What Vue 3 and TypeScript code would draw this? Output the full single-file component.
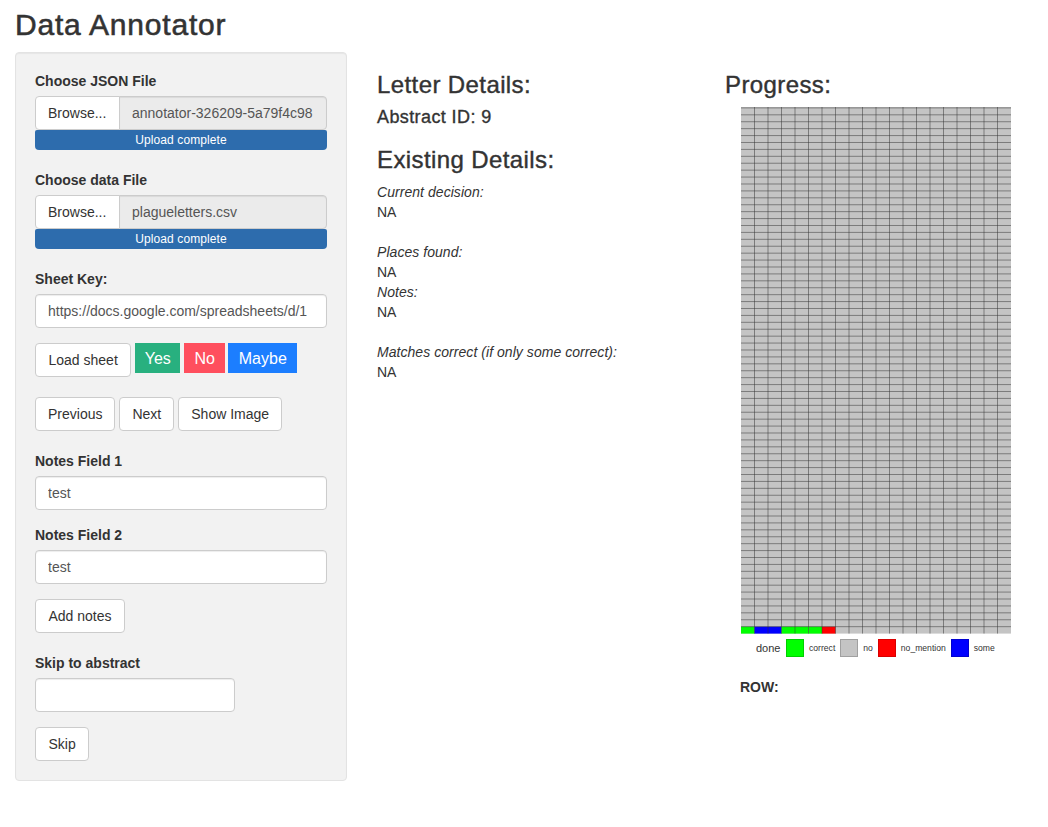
<script setup lang="ts">
const cols = 20
const rows = 76
const cellW = 13.5
const cellH = 6.917
const top = 0.9
const colored = [
  { col: 0, fill: '#00ff00' },
  { col: 1, fill: '#0000ff' },
  { col: 2, fill: '#0000ff' },
  { col: 3, fill: '#00ff00' },
  { col: 4, fill: '#00ff00' },
  { col: 5, fill: '#00ff00' },
  { col: 6, fill: '#ff0000' }
]
const gridBottom = top + rows * cellH
const rowLines = Array.from({ length: rows }, (_, r) => top + r * cellH)
const colLines = Array.from({ length: cols - 1 }, (_, c) => (c + 1) * cellW)
const legend = [
  { color: '#00ff00', border: '#00d000', label: 'correct' },
  { color: '#c4c4c4', border: '#a0a0a0', label: 'no' },
  { color: '#ff0000', border: '#d80000', label: 'no_mention' },
  { color: '#0000ff', border: '#0000d0', label: 'some' }
]
</script>

<template>
  <div class="page">
    <h1 class="title">Data Annotator</h1>
    <div class="layout">
      <form class="well" @submit.prevent>
        <section class="group lead">
          <label class="label">Choose JSON File</label>
          <div class="file-row">
            <span class="browse">Browse...</span>
            <input class="file-name" readonly value="annotator-326209-5a79f4c98" />
          </div>
          <div class="upload">Upload complete</div>
        </section>
        <section class="group">
          <label class="label">Choose data File</label>
          <div class="file-row">
            <span class="browse">Browse...</span>
            <input class="file-name" readonly value="plagueletters.csv" />
          </div>
          <div class="upload">Upload complete</div>
        </section>
        <section class="group key">
          <label class="label">Sheet Key:</label>
          <input class="input" value="https://docs.google.com/spreadsheets/d/1" />
        </section>
        <div class="actions first">
          <button class="btn wide">Load sheet</button>
          <button class="flat yes">Yes</button>
          <button class="flat no">No</button>
          <button class="flat maybe">Maybe</button>
        </div>
        <div class="actions second">
          <button class="btn">Previous</button>
          <button class="btn">Next</button>
          <button class="btn">Show Image</button>
        </div>
        <section class="group note">
          <label class="label">Notes Field 1</label>
          <input class="input" value="test" />
        </section>
        <section class="group note">
          <label class="label">Notes Field 2</label>
          <input class="input" value="test" />
        </section>
        <button class="btn add wide">Add notes</button>
        <section class="group skip">
          <label class="label">Skip to abstract</label>
          <input class="input short" />
        </section>
        <button class="btn wide">Skip</button>
      </form>

      <main class="details">
        <h3 class="h3">Letter Details:</h3>
        <h4 class="h4">Abstract ID: 9</h4>
        <h3 class="h3 existing">Existing Details:</h3>
        <div class="facts">
          <em>Current decision:</em>
          <span>NA</span>
          <span class="blank"></span>
          <em>Places found:</em>
          <span>NA</span>
          <em>Notes:</em>
          <span>NA</span>
          <span class="blank"></span>
          <em>Matches correct (if only some correct):</em>
          <span>NA</span>
        </div>
      </main>

      <aside class="progress">
        <h3 class="h3">Progress:</h3>
        <div class="chart">
          <svg class="tiles" width="270" height="527" viewBox="0 0 270 527" role="img" aria-label="Progress grid">
            <rect x="0" y="0" width="270" :height="gridBottom" fill="#c4c4c4" />
            <rect
              v-for="cell in colored"
              :key="cell.col"
              :x="cell.col * cellW"
              :y="gridBottom - cellH"
              :width="cellW"
              :height="cellH"
              :fill="cell.fill"
            />
            <line
              v-for="y in rowLines"
              :key="'r' + y"
              x1="0"
              x2="270"
              :y1="y"
              :y2="y"
              stroke="#333"
              stroke-width="0.5"
            />
            <line
              v-for="x in colLines"
              :key="'c' + x"
              :x1="x"
              :x2="x"
              y1="0"
              :y2="gridBottom"
              stroke="#333"
              stroke-width="0.5"
            />
          </svg>
          <div class="legend">
            <span class="legend-title">done</span>
            <template v-for="item in legend" :key="item.label">
              <span class="swatch" :style="{ background: item.color, borderColor: item.border }"></span>
              <span class="legend-label">{{ item.label }}</span>
            </template>
          </div>
        </div>
        <div class="row-label">ROW:</div>
      </aside>
    </div>
  </div>
</template>

<style>
html,
body {
  margin: 0;
  background: #fff;
}
</style>

<style scoped>
.page {
  box-sizing: border-box;
  min-height: 827px;
  padding: 0 15px;
  font-family: "Liberation Sans", Arial, sans-serif;
  font-size: 14px;
  line-height: 20px;
  color: #333;
}
.title {
  margin: 0;
  padding-top: 8px;
  height: 52px;
  box-sizing: border-box;
  font-size: 30px;
  line-height: 33px;
  font-weight: 400;
  letter-spacing: 0.8px;
  -webkit-text-stroke: 0.55px #333;
}
.layout {
  display: flex;
  align-items: flex-start;
}
.well {
  box-sizing: border-box;
  flex: 0 0 332px;
  width: 332px;
  height: 729px;
  padding: 19px;
  background: #f2f2f2;
  border: 1px solid #e3e3e3;
  border-radius: 4px;
  box-shadow: inset 0 1px 1px rgba(0, 0, 0, 0.05);
}
.group {
  display: flex;
  flex-direction: column;
  margin-bottom: 20px;
}
.group.lead .label {
  margin-top: -1px;
}
.group.key,
.group.note {
  margin-bottom: 15px;
}
.group.skip {
  margin-top: 20px;
  margin-bottom: 15px;
}
.label {
  display: block;
  margin-bottom: 5px;
  font-weight: 700;
  line-height: 20px;
}
.file-row {
  display: flex;
  height: 34px;
  box-sizing: border-box;
}
.browse {
  box-sizing: border-box;
  flex: 0 0 85px;
  height: 34px;
  padding: 6px 12px;
  background: #fff;
  border: 1px solid #ccc;
  border-radius: 4px 0 0 4px;
  color: #333;
}
.file-name {
  box-sizing: border-box;
  flex: 1;
  min-width: 0;
  height: 34px;
  margin-left: -1px;
  padding: 6px 12px;
  background: #ebebeb;
  border: 1px solid #ccc;
  border-radius: 0 4px 4px 0;
  box-shadow: inset 0 1px 1px rgba(0, 0, 0, 0.075);
  font: inherit;
  color: #555;
  outline: none;
}
.upload {
  height: 20px;
  background: #2d6cad;
  border-radius: 2px 2px 4px 4px;
  color: #fff;
  font-size: 12px;
  line-height: 20px;
  letter-spacing: 0.1px;
  text-align: center;
}
.input {
  box-sizing: border-box;
  width: 100%;
  height: 34px;
  padding: 6px 12px;
  background: #fff;
  border: 1px solid #ccc;
  border-radius: 4px;
  box-shadow: inset 0 1px 1px rgba(0, 0, 0, 0.075);
  font: inherit;
  color: #555;
  outline: none;
}
.input.short {
  width: 200px;
}
.actions {
  display: flex;
  align-items: flex-start;
  gap: 4px;
}
.actions.first,
.actions.second {
  margin-bottom: 20px;
}
.btn {
  box-sizing: border-box;
  height: 34px;
  padding: 6px 12px;
  background: #fff;
  border: 1px solid #ccc;
  border-radius: 4px;
  font: inherit;
  color: #333;
}
.btn.wide {
  padding: 6px 12.5px;
}
.btn.add {
  display: block;
}
.flat {
  box-sizing: border-box;
  height: 30px;
  padding: 1px 0 0;
  border: 0;
  font: inherit;
  font-size: 16px;
  color: #fff;
}
.yes {
  width: 45px;
  background: #28b07f;
}
.no {
  width: 41px;
  background: #ff4f5e;
}
.maybe {
  width: 69px;
  margin-left: -1px;
  background: #1c7eff;
}
.details {
  box-sizing: border-box;
  flex: 0 0 378px;
  width: 378px;
  padding-left: 30px;
}
.h3 {
  margin: 0;
  padding-top: 20px;
  font-size: 24px;
  line-height: 26px;
  font-weight: 400;
  letter-spacing: 0.4px;
  -webkit-text-stroke: 0.4px #333;
}
.h4 {
  margin: 9px 0 0;
  font-size: 18px;
  line-height: 20px;
  font-weight: 400;
  letter-spacing: 0.4px;
  -webkit-text-stroke: 0.35px #333;
}
.existing {
  padding-top: 20px;
}
.facts {
  display: flex;
  flex-direction: column;
  margin-top: 9px;
}
.facts em {
  letter-spacing: 0.05px;
}
.blank {
  height: 20px;
}
.progress {
  flex: 1;
  min-width: 0;
}
.chart {
  margin-top: 9px;
  padding-left: 16px;
}
.tiles {
  display: block;
}
.legend {
  display: flex;
  align-items: center;
  height: 18px;
  margin-top: 5px;
  padding-left: 15px;
}
.legend-title {
  width: 30px;
  font-size: 11px;
  line-height: 18px;
}
.swatch {
  box-sizing: border-box;
  flex: 0 0 18px;
  height: 18px;
  border: 1px solid;
  border-top-color: transparent;
  border-left-color: transparent;
}
.legend-label {
  padding: 0 5px;
  font-size: 8.6px;
  line-height: 18px;
}
.row-label {
  margin-top: 20px;
  padding-left: 15px;
  font-weight: 700;
}
</style>
